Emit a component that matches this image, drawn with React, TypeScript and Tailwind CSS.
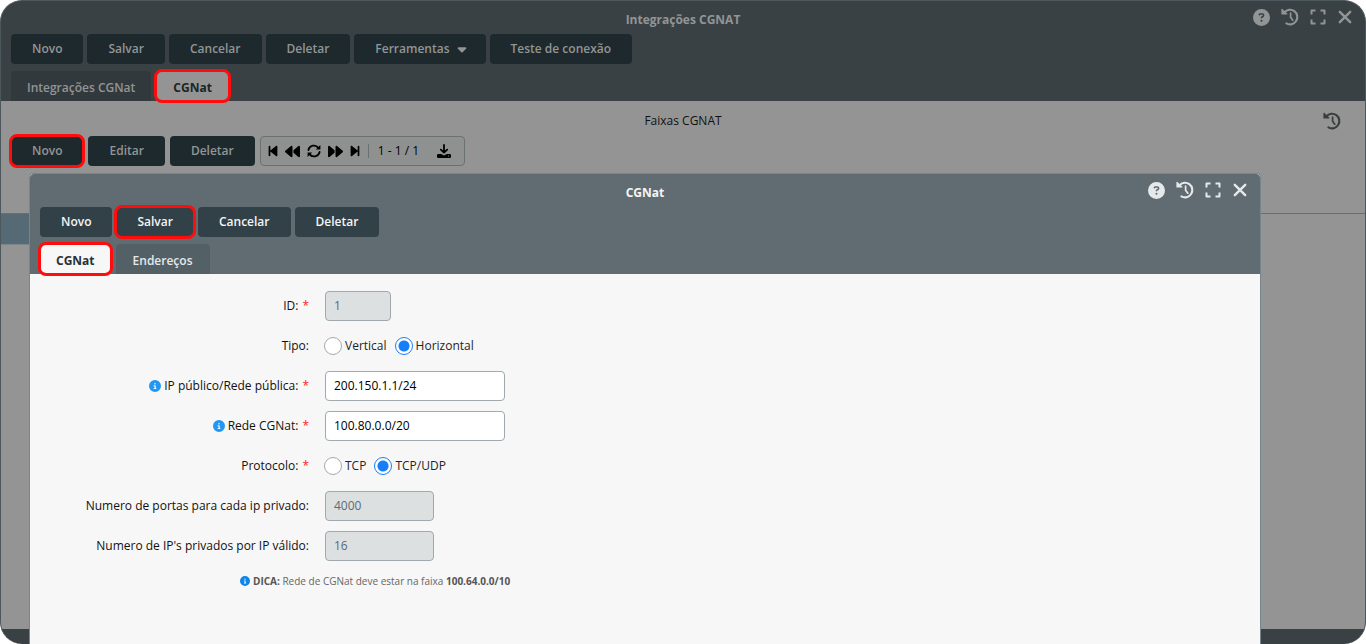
import React, { useState } from "react";
import {
  FaCaretDown,
  FaCircleInfo,
  FaCircleQuestion,
  FaBackward,
  FaForward,
  FaBackwardStep,
  FaForwardStep,
} from "react-icons/fa6";

function HistoryIcon() {
  return (
    <svg viewBox="0 0 20 20" className="size-5" fill="none" stroke="currentColor" strokeWidth="2.1" strokeLinecap="round" strokeLinejoin="round">
      <path d="M4.4 5.4A7.3 7.3 0 1 1 6.4 16.4" />
      <path d="M10.6 6v4.2l2.2 3" strokeWidth="1.7" />
      <path d="M2 2.4v4.6h4.8z" fill="currentColor" strokeWidth="1.2" />
    </svg>
  );
}

function ExpandIcon() {
  return (
    <svg viewBox="0 0 16 16" className="size-4" fill="none" stroke="currentColor" strokeWidth="2" strokeLinejoin="round">
      <path d="M1.5 5.5v-4h4M10.5 1.5h4v4M14.5 10.5v4h-4M5.5 14.5h-4v-4" />
    </svg>
  );
}

function CloseIcon() {
  return (
    <svg viewBox="0 0 14 14" className="size-3.5" fill="none" stroke="currentColor" strokeWidth="2.4" strokeLinecap="round">
      <path d="M1.8 1.8l10.4 10.4M12.2 1.8L1.8 12.2" />
    </svg>
  );
}

function RefreshIcon() {
  return (
    <svg viewBox="0 0 14 14" className="size-3.5" fill="none" stroke="currentColor" strokeWidth="1.8" strokeLinecap="round">
      <path d="M1.4 6A5.6 5.6 0 0 1 11.4 3.9" />
      <path d="M12.6 8A5.6 5.6 0 0 1 2.6 10.1" />
      <path d="M13.4 1v4.6H8.8zM.6 13V8.4h4.6z" fill="currentColor" stroke="none" />
    </svg>
  );
}

function DownloadIcon() {
  return (
    <svg viewBox="0 0 14 14" className="size-3.5" fill="none" stroke="currentColor" strokeWidth="1.8" strokeLinecap="round" strokeLinejoin="round">
      <path d="M7 1v7.4M3.8 5.6L7 8.6l3.2-3" />
      <path d="M0 11.3a1.3 1.3 0 0 1 1.3-1.3h2.9L7 11.6 9.8 10h2.9a1.3 1.3 0 0 1 1.3 1.3v1.4a1.3 1.3 0 0 1-1.3 1.3H1.3A1.3 1.3 0 0 1 0 12.7z" fill="currentColor" stroke="none" />
      <circle cx="11.6" cy="12" r=".6" fill="#8f9190" stroke="none" />
    </svg>
  );
}

const ring = "rounded-md outline-[3px] -outline-offset-1 outline-[#ff0d0d] outline-solid";

function ToolButton({ children, marked, dim }: { children: React.ReactNode; marked?: boolean; dim?: boolean }) {
  return (
    <button
      type="button"
      className={`flex h-[30px] items-center px-[21px] font-semibold ${
        dim ? "bg-[#1e292d] text-[#929596]" : "bg-[#324147] text-[#f4f5f5]"
      } ${marked ? ring : "rounded"}`}
    >
      {children}
    </button>
  );
}

function WindowActions() {
  return (
    <div className="absolute top-1.5 right-[13px] flex items-center gap-2.5">
      <button type="button" aria-label="Ajuda"><FaCircleQuestion className="size-[17px]" /></button>
      <button type="button" aria-label="Histórico"><HistoryIcon /></button>
      <button type="button" aria-label="Expandir"><ExpandIcon /></button>
      <button type="button" aria-label="Fechar" className="ml-0.5"><CloseIcon /></button>
    </div>
  );
}

function Required() {
  return <span className="ml-1 text-[#ff1a1a]">*</span>;
}

function Row({ label, id, info, required, children }: {
  label: string; id?: string; info?: boolean; required?: boolean; children: React.ReactNode;
}) {
  const content = (
    <>
      {info && <FaCircleInfo className="mr-[3px] size-3 text-[#2196f3]" />}
      {label}
      {required && <Required />}
    </>
  );
  return (
    <div className="flex h-[30px] items-center gap-4">
      {id ? (
        <label htmlFor={id} className="flex w-[279px] items-center justify-end text-[#111]">{content}</label>
      ) : (
        <span className="flex w-[279px] items-center justify-end text-[#111]">{content}</span>
      )}
      {children}
    </div>
  );
}

const inputBase = "h-[30px] rounded border border-[#9fa9ae] px-2 pb-0.5";

function Radios({ name, options, initial }: { name: string; options: string[]; initial: string }) {
  const [value, setValue] = useState(initial);
  return (
    <div role="radiogroup" aria-label={name} className="-ml-px flex items-center gap-2">
      {options.map((o) => (
        <label key={o} className="flex items-center gap-[3px] text-[#1d2528]">
          <input
            type="radio"
            name={name}
            checked={value === o}
            onChange={() => setValue(o)}
            className="size-[18px] appearance-none rounded-full border border-[#a3abaf] bg-white checked:border-[#177ef9] checked:bg-[radial-gradient(circle,#177ef9_5px,white_6px)]"
          />
          {o}
        </label>
      ))}
    </div>
  );
}

function Pager() {
  return (
    <div className="flex h-[30px] items-center rounded border border-[#6a7172] bg-[#8f9190] pr-[13px] pl-[7px] text-black">
      <div className="flex items-center gap-[7px]">
        <button type="button" aria-label="Primeiro"><FaBackwardStep className="h-3.5 w-2.5" /></button>
        <button type="button" aria-label="Anterior"><FaBackward className="size-[15px]" /></button>
        <button type="button" aria-label="Atualizar"><RefreshIcon /></button>
        <button type="button" aria-label="Próximo"><FaForward className="size-[15px]" /></button>
        <button type="button" aria-label="Último"><FaForwardStep className="h-3.5 w-2.5" /></button>
      </div>
      <span className="ml-2 h-3.5 w-px bg-[#6a7172]" />
      <span className="ml-[9px]">1 - 1 / 1</span>
      <button type="button" aria-label="Baixar" className="ml-[18px]"><DownloadIcon /></button>
    </div>
  );
}

function Dialog() {
  return (
    <section
      role="dialog"
      aria-label="CGNat"
      className="absolute top-[172px] right-[104px] bottom-0 left-7 flex flex-col rounded-t border border-b-0 border-[#75868e] bg-[#f7f7f7]"
    >
      <header className="relative rounded-t bg-[#606c72] px-2.5 pt-2.5 text-[#e6e9ea]">
        <h2 className="text-center font-bold text-[#f4f5f5]">CGNat</h2>
        <WindowActions />
        <div className="mt-[5px] flex gap-1">
          <ToolButton>Novo</ToolButton>
          <ToolButton marked>Salvar</ToolButton>
          <ToolButton>Cancelar</ToolButton>
          <ToolButton>Deletar</ToolButton>
        </div>
        <div role="tablist" className="mt-[7px] flex gap-[5px]">
          <button type="button" role="tab" aria-selected="true" className={`relative h-[30px] bg-[#f7f7f7] px-4 pt-[3px] font-bold text-[#263238] ${ring}`}>CGNat</button>
          <button type="button" role="tab" aria-selected="false" className="h-[30px] rounded-t bg-[#536066] px-[17px] pt-[3px] font-semibold">Endereços</button>
        </div>
      </header>
      <form className="flex flex-col gap-2.5 pt-[17px]">
        <Row label="ID:" id="id" required>
          <input id="id" disabled defaultValue="1" className={`${inputBase} w-[66px] bg-[#dce0e1] text-[#5f6a6e]`} />
        </Row>
        <Row label="Tipo:">
          <Radios name="Tipo" options={["Vertical", "Horizontal"]} initial="Horizontal" />
        </Row>
        <Row label="IP público/Rede pública:" id="public" info required>
          <input id="public" defaultValue="200.150.1.1/24" className={`${inputBase} w-[180px] bg-white text-black`} />
        </Row>
        <Row label="Rede CGNat:" id="cgnat" info required>
          <input id="cgnat" defaultValue="100.80.0.0/20" className={`${inputBase} w-[180px] bg-white text-black`} />
        </Row>
        <Row label="Protocolo:" required>
          <Radios name="Protocolo" options={["TCP", "TCP/UDP"]} initial="TCP/UDP" />
        </Row>
        <Row label="Numero de portas para cada ip privado:" id="ports">
          <input id="ports" disabled defaultValue="4000" className={`${inputBase} w-[109px] bg-[#dce0e1] text-[#5f6a6e]`} />
        </Row>
        <Row label="Numero de IP's privados por IP válido:" id="ips">
          <input id="ips" disabled defaultValue="16" className={`${inputBase} w-[109px] bg-[#dce0e1] text-[#5f6a6e]`} />
        </Row>
        <p className="ml-[210px] flex items-center gap-[3px] text-[10px] leading-5 text-[#666]">
          <FaCircleInfo className="size-2.5 text-[#0d86e8]" />
          <span>
            <b className="text-[#555]">DICA:</b> Rede de CGNat deve estar na faixa <b className="text-[#555]">100.64.0.0/10</b>
          </span>
        </p>
      </form>
    </section>
  );
}

export default function App() {
  return (
    <div className="bg-white font-['Open_Sans','Noto_Sans',sans-serif] text-[12px] leading-[18px]">
      <main className="relative flex min-h-screen flex-col overflow-hidden rounded-[22px] border border-b-0 border-[#4d585c] bg-[#3a4144]">
        <header className="relative px-2.5 pt-2.5 text-[#929596]">
          <h1 className="text-center font-bold">Integrações CGNAT</h1>
          <WindowActions />
          <div className="mt-[5px] flex gap-1">
            <ToolButton dim>Novo</ToolButton>
            <ToolButton dim>Salvar</ToolButton>
            <ToolButton dim>Cancelar</ToolButton>
            <ToolButton dim>Deletar</ToolButton>
            <ToolButton dim>Ferramentas <FaCaretDown className="-mr-1 ml-[5px] size-3.5" /></ToolButton>
            <ToolButton dim>Teste de conexão</ToolButton>
          </div>
          <div role="tablist" className="mt-[7px] flex gap-[5px]">
            <button type="button" role="tab" aria-selected="false" className="h-[30px] rounded-t bg-[#32393c] px-4 pt-[3px] font-semibold">Integrações CGNat</button>
            <button type="button" role="tab" aria-selected="true" className={`relative z-10 h-[30px] bg-[#949494] px-[17px] pt-[3px] font-bold text-[#1c2528] ${ring}`}>CGNat</button>
          </div>
        </header>
        <section className="flex grow flex-col bg-[#949494]">
          <div className="relative pt-[11px] pb-1.5">
            <h2 className="text-center text-[#111]">Faixas CGNAT</h2>
            <button type="button" aria-label="Histórico" className="absolute top-2.5 right-[23px] text-[#3a3d3e]"><HistoryIcon /></button>
          </div>
          <div className="flex gap-[5px] px-2.5">
            <ToolButton dim marked>Novo</ToolButton>
            <ToolButton dim>Editar</ToolButton>
            <ToolButton dim>Deletar</ToolButton>
            <Pager />
          </div>
          <div className="mt-[47px] h-px bg-[#6c6e6e]" />
          <div className="h-[31px] w-1/2 border-b border-[#7f8688] bg-[#556a75]" />
        </section>
        <footer className="h-[15px]" />
        <Dialog />
      </main>
    </div>
  );
}
